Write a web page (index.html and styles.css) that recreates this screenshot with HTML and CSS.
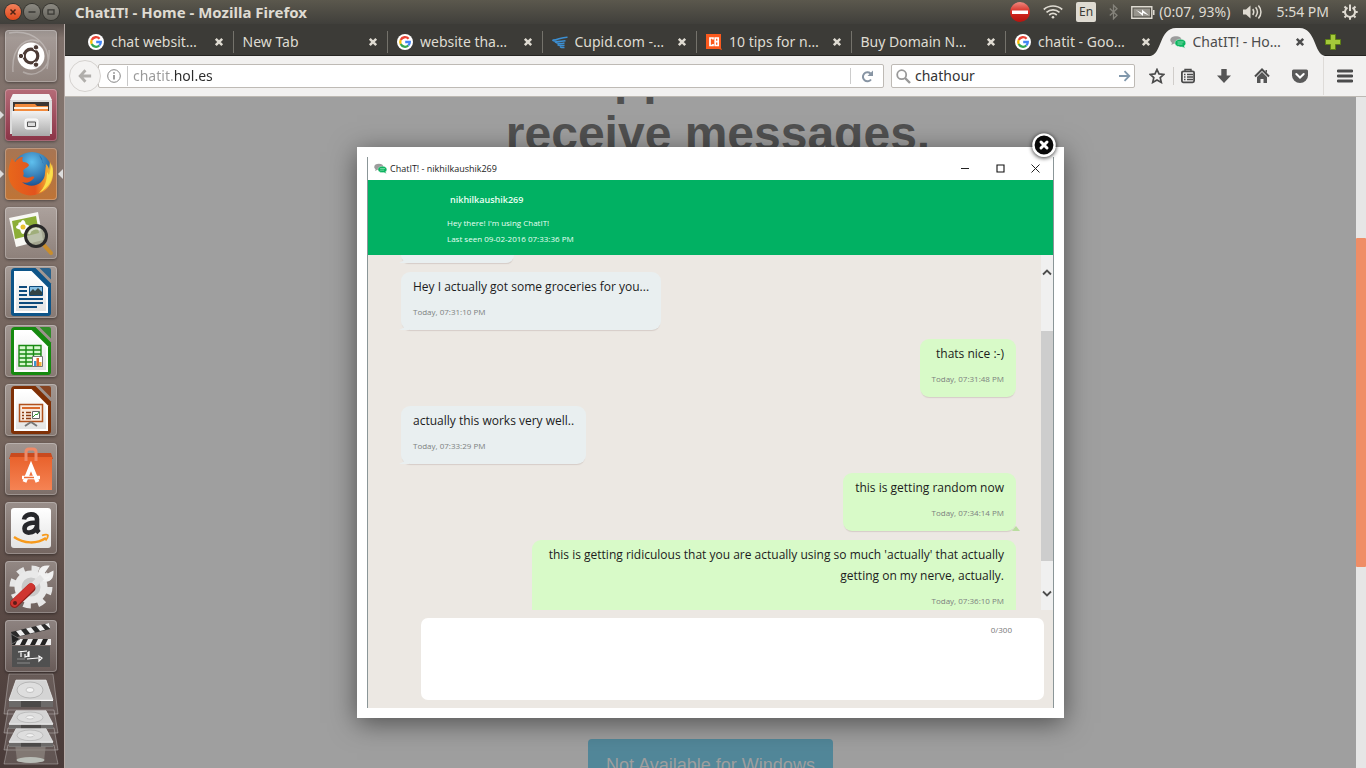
FILE: index.html
```html
<!DOCTYPE html>
<html lang="en">
<head>
<meta charset="utf-8">
<title>ChatIT! - Home</title>
<link rel="stylesheet" href="styles.css">
</head>
<body>
<svg class="defs" aria-hidden="true">
  <defs>
    <linearGradient id="silver" x1="0" y1="0" x2="0" y2="1"><stop offset="0" stop-color="#f2f2f2"/><stop offset="1" stop-color="#a9a9a9"/></linearGradient>
    <linearGradient id="paper" x1="0" y1="0" x2="0" y2="1"><stop offset="0" stop-color="#fff"/><stop offset="1" stop-color="#e4e4e4"/></linearGradient>
    <linearGradient id="bag" x1="0" y1="0" x2="0" y2="1"><stop offset="0" stop-color="#e9622c"/><stop offset="1" stop-color="#f58354"/></linearGradient>
    <radialGradient id="globe" cx=".5" cy=".25" r=".7"><stop offset="0" stop-color="#5fc0ee"/><stop offset="1" stop-color="#123f80"/></radialGradient>
    <linearGradient id="fox" x1="0" y1="0" x2="1" y2="0"><stop offset="0" stop-color="#e8671b"/><stop offset=".6" stop-color="#e2531d"/><stop offset="1" stop-color="#f9d23c"/></linearGradient>
    <linearGradient id="stop" x1="0" y1="0" x2="0" y2="1"><stop offset="0" stop-color="#f08a80"/><stop offset=".5" stop-color="#d5281f"/><stop offset="1" stop-color="#b3140f"/></linearGradient>
    <symbol id="google" viewBox="0 0 16 16">
      <circle cx="8" cy="8" r="8" fill="#fff"/>
      <g fill="none" stroke-width="2.3">
        <path d="M11.6 4.8A4.8 4.8 0 0 0 3.7 5.9" stroke="#ea4335"/>
        <path d="M3.7 5.9a4.8 4.8 0 0 0 0 4.2" stroke="#fbbc05"/>
        <path d="M3.7 10.1a4.8 4.8 0 0 0 7.6 1.4" stroke="#34a853"/>
        <path d="M11.3 11.5A4.6 4.6 0 0 0 12.8 8H8.2" stroke="#4285f4"/>
      </g>
    </symbol>
    <symbol id="chat" viewBox="0 0 16 16">
      <path d="M6 2.2c3.300 0 5.600 1.500 5.600 3.800S9.300 9.800 6 9.800H3.800L1.300 11l.7-2.200C1 8.100.3 7.100.3 6c0-2.300 2.400-3.800 5.700-3.800z" fill="#9c9c9c"/>
      <path d="M10.500 5.200c3.300 0 5.300 1.600 5.300 3.900 0 1.200-.6 2.200-1.600 2.900l1 2.200-3-1.200h-1.700c-3.300 0-5.600-1.500-5.600-3.900s2.300-3.900 5.600-3.900z" fill="#0bb45f" stroke="#f2f1f0" stroke-width=".5"/>
      <path d="M7.500 8h6M7.500 10h5" stroke="#8fe0b4" stroke-width=".9"/>
    </symbol>
    <symbol id="cross" viewBox="0 0 10 10"><path d="M1.800 1.800l6.400 6.400M8.200 1.800L1.800 8.200" stroke="currentColor" stroke-width="2.500" fill="none"/></symbol>
    <symbol id="doc" viewBox="0 0 52 52">
      <path d="M10 2h20.500L46 17.500V47a3 3 0 0 1-3 3H9a3 3 0 0 1-3-3V6a4 4 0 0 1 4-4z" fill="currentColor"/>
      <path d="M34.500 2h9.500a2 2 0 0 1 2 2v9.500z" fill="currentColor" opacity=".8"/>
      <path d="M9 5h17.500L43 21.500V47H9z" fill="#fff"/><path d="M11 7h14.500L41 22.500V45H11z" fill="url(#paper)"/>
    </symbol>
    <symbol id="drive" viewBox="0 0 48 30" preserveAspectRatio="none">
      <path d="M9 1h30l7 20v7H2v-7z" fill="#bcbcbc"/><path d="M9 1h30l7 20H2z" fill="#d4d4d4" stroke="#eee" stroke-width=".6"/>
      <ellipse cx="23" cy="11" rx="13" ry="8" fill="#dedede" stroke="#b7b7b7"/><ellipse cx="23" cy="11" rx="4" ry="2.500" fill="#f4f4f4" stroke="#aaa" stroke-width=".6"/>
      <path d="M2 21.500h44v6.500H2z" fill="#6c6a69"/><path d="M14 22h20v6H14z" fill="#4b4948"/><path d="M2 21.500h44" stroke="#fafafa"/>
    </symbol>
  </defs>
</svg>

<header class="panel">
  <div class="window-buttons">
    <button class="wm wm-close" aria-label="Close window"><svg viewBox="0 0 16 16"><path d="M5.500 5.500l5 5M10.500 5.500l-5 5" stroke="#4d2415" stroke-width="1.500"/></svg></button>
    <button class="wm" aria-label="Minimize window"><svg viewBox="0 0 16 16"><path d="M4.500 8h7" stroke="#3a3935" stroke-width="1.500"/></svg></button>
    <button class="wm" aria-label="Restore window"><svg viewBox="0 0 16 16"><path d="M5 5.800h6v4.400H5z" stroke="#3a3935" stroke-width="1.300" fill="none"/></svg></button>
  </div>
  <div class="window-title">ChatIT! - Home - Mozilla Firefox</div>
  <div class="indicators">
    <svg width="20" height="22" viewBox="0 0 20 22"><circle cx="10" cy="11" r="10" fill="url(#stop)"/><path d="M2 9.500h16v3.500H2z" fill="#fff"/></svg>
    <svg width="20" height="16" viewBox="0 0 20 16" fill="none" stroke="#dfdbd2" stroke-width="1.700"><path d="M.8 5.500C6 .8 14 .8 19.200 5.500M3.500 8.300c3.800-3.300 9.200-3.300 13 0M6.200 11c2.300-1.900 5.300-1.900 7.600 0"/><circle cx="10" cy="13.300" r="1.300" fill="#dfdbd2" stroke="none"/></svg>
    <span class="lang">En</span>
    <svg width="9" height="16" viewBox="0 0 9 16"><path d="M.8 4.500L8 11.300 4.500 14.800V1.200L8 4.700.8 11.500" fill="none" stroke="#85837b" stroke-width="1.300"/></svg>
    <span class="battery"><svg width="24" height="13" viewBox="0 0 24 13"><path d="M.8.800h20v11.400H.8z" fill="none" stroke="#dfdbd2" stroke-width="1.400"/><path d="M22 4h1.500v5H22z" fill="#dfdbd2"/><path d="M2.500 2.500h16.500v8H2.500z" fill="#97948c"/><path d="M5 4l6 3V3.500l7 6-6-2.500v3z" fill="#fff"/></svg>(0:07, 93%)</span>
    <svg width="20" height="16" viewBox="0 0 20 16"><path d="M0 5.500h3L7.500 1.500v13L3 10.500H0z" fill="#dfdbd2"/><path d="M9.800 5c1.200 1.800 1.200 4.200 0 6M12.600 3.300c2.200 2.800 2.200 6.600 0 9.400M15.400 1.500c3.400 3.900 3.400 9.100 0 13" fill="none" stroke="#dfdbd2" stroke-width="1.500"/></svg>
    <span>5:54 PM</span>
    <svg width="16" height="16" viewBox="0 0 16 16" fill="none" stroke="#dfdbd2"><path d="M5.500 3.600a5 5 0 1 0 5 0" stroke-width="2"/><path d="M8 .5v6.500" stroke-width="2"/><path d="M2.500 2.500l1.700 1.700M13.500 2.500l-1.700 1.700M.3 8h2.500M13.200 8h2.500M2.500 13.500l1.700-1.700M13.500 13.500l-1.700-1.700M8 13v2.700" stroke-width="2"/></svg>
  </div>
</header>

<div class="desktop">
<nav class="launcher" aria-label="Launcher">
  <a href="#" class="tile" aria-label="Dash"><svg viewBox="0 0 52 52"><g fill="none" stroke="#fff" opacity=".28" stroke-width="1.500"><path d="M4 3c24-4 44 12 38 36M8 42C6 14 24 6 34 12M44 20c2 20-14 28-26 22"/></g><circle cx="26" cy="26" r="13.500" fill="#fff"/><circle cx="26" cy="26" r="6.800" fill="none" stroke="#4c3b36" stroke-width="3.200"/><g fill="#4c3b36" stroke="#fff"><circle cx="16" cy="26" r="2.700"/><circle cx="31" cy="17.300" r="2.700"/><circle cx="31" cy="34.700" r="2.700"/></g></svg></a>
  <a href="#" class="tile tile-files is-running" aria-label="Files"><svg viewBox="0 0 52 52"><path d="M8 5h36l3 7v33H5V12z" fill="#dcdcdc"/><path d="M8 5h36l3 6H5z" fill="#f4f4f4"/><path d="M8 13h36v9H8z" fill="#3b3634"/><path d="M10 15h20l2 2h11v6H9z" fill="#f28a3c"/><path d="M9 18h34v2H9z" fill="#fff0df"/><path d="M7 22h38v25H7z" fill="url(#silver)"/><rect x="20" y="30" width="13" height="10" rx="2" fill="#eee" stroke="#fff"/><path d="M22.500 33h8v4.500h-8z" fill="#ddd" stroke="#555"/></svg></a>
  <a href="#" class="tile tile-firefox is-running is-active" aria-label="Firefox"><svg viewBox="0 0 52 52"><circle cx="27" cy="24" r="20" fill="url(#globe)"/><path d="M34 7c3 2 4 5 3 7l5 6-3 10 5-4z" fill="#2c6fae"/><path d="M7 10c1 2 2 3 3 4 2-3 5-5 8-5-1 2-1 3 0 5 3 0 5 1 6 3-1 3-5 3-6 6 1 2 1 3 0 5 2 2 5 2 8 1 2-1 4 0 3 1-3 4-8 6-12 4 9 8 23 2 23-9l1-9c2 2 3 4 3 6l1-8c3 6 4 12 2 18-4 13-20 20-33 12C2 37 1 23 7 10z" fill="url(#fox)"/><path d="M47 16c3 14-3 24-13 29 6-6 8-12 8-21l2 3z" fill="#fbe04c"/></svg></a>
  <a href="#" class="tile" aria-label="Image Viewer"><svg viewBox="0 0 52 52"><path d="M4 11l29-6 5 28-27 7z" fill="#f8f8f4"/><path d="M7 14l24-5 3 17-24 6z" fill="#8cae37"/><g fill="#fff"><ellipse cx="18" cy="20" rx="7" ry="3"/><ellipse cx="18" cy="20" rx="3" ry="7"/><ellipse cx="18" cy="20" rx="6" ry="3" transform="rotate(45 18 20)"/></g><circle cx="18" cy="20" r="2.500" fill="#e9c12f"/><path d="M38 37l8 9" stroke="#c88d2c" stroke-width="4" stroke-linecap="round"/><circle cx="31" cy="29" r="10.500" fill="#a7ae93" fill-opacity=".75" stroke="#292929" stroke-width="3"/><path d="M24 27a7 7 0 0 1 11-4" stroke="#fff" fill="none" opacity=".6" stroke-width="2"/></svg></a>
  <a href="#" class="tile" aria-label="Writer"><svg viewBox="0 0 52 52" color="#0d5488"><use href="#doc"/><path d="M14 21h8M14 25h8M14 29h8M14 33h24M14 37h24M14 41h18" stroke="#0d4a7c" stroke-width="1.900"/><path d="M24.500 20.500h13v9h-13z" fill="#85bfe4" stroke="#0d4a7c"/><path d="M25 29v-3l3-3 2 2 3-3 4 4v3z" fill="#344"/></svg></a>
  <a href="#" class="tile" aria-label="Calc"><svg viewBox="0 0 52 52" color="#15890f"><use href="#doc"/><path d="M14 20h22v21H14z" fill="#d8f7cf"/><path d="M14 20.500h22V41H14zM14 25h22M14 29h22M14 33h22M14 37h22M21 20v21M28.500 20v21" stroke="#198a13" stroke-width="1.400" fill="none"/><path d="M27.500 31.500h10v10h-10z" fill="#fff" stroke="#777"/><path d="M29 36h2.500v5H29z" fill="#3a97d2"/><path d="M31.500 33H34v8h-2.500z" fill="#e4682a"/><path d="M34 37h2.500v4H34z" fill="#f3b43b"/></svg></a>
  <a href="#" class="tile" aria-label="Impress"><svg viewBox="0 0 52 52" color="#7f3006"><use href="#doc"/><path d="M14.500 20.500h23v17h-23z" fill="#f8e9dd" stroke="#b0501c" stroke-width="1.500"/><path d="M17 24h18" stroke="#d8692d" stroke-width="2"/><path d="M17 28.500h2M17 31.500h2M17 34.500h2M21 28.500h5M21 31.500h5M21 34.500h5" stroke="#8d3c12" stroke-width="1.600"/><path d="M27.500 27.500h7v7h-7z" fill="#fff" stroke="#666"/><path d="M28 33l3-3 1 1 2-3" stroke="#2d9a2d" fill="none"/><path d="M26 38l-6 4M26 38l6 4" stroke="#777" stroke-width="2"/></svg></a>
  <a href="#" class="tile" aria-label="Software"><svg viewBox="0 0 52 52"><path d="M6 10h40l2 6H4z" fill="#c94a1e"/><path d="M5 14h42v33H5z" fill="url(#bag)"/><path d="M21 18V9q0-3 3-3h4q3 0 3 3v9" fill="none" stroke="#ee8a68" stroke-width="3"/><path d="M19.500 39L26 23l6.500 16" fill="none" stroke="#fff" stroke-width="4"/><path d="M17 34.500h18" stroke="#fff" stroke-width="3.500"/><path d="M19 34.500h10" stroke="#ee6d35" stroke-width="1.500"/></svg></a>
  <a href="#" class="tile" aria-label="Amazon"><svg viewBox="0 0 52 52"><rect x="6" y="6" width="40" height="40" rx="3" fill="url(#paper)"/><path d="M19 17.500c1-6.500 13-7 13-.5v9.500c0 2 .8 3 2 4.200M32 20.500c-8 0-12.500 1.500-12.500 6.300 0 5.700 9.500 5 12.300-1.800" fill="none" stroke="#26272b" stroke-width="4.600"/><path d="M9 35c10 7 23 7 32 1" fill="none" stroke="#f79a1c" stroke-width="2.500"/><path d="M37 33.500c3-1.500 6-1 6-.2s-.8 3.500-2.500 5.200" fill="none" stroke="#f79a1c" stroke-width="1.800"/></svg></a>
  <a href="#" class="tile" aria-label="Settings"><svg viewBox="0 0 52 52"><circle cx="26" cy="26" r="18.500" fill="none" stroke="#e6e6e6" stroke-width="6" stroke-dasharray="7.300 7.230"/><circle cx="26" cy="26" r="13" fill="#c9c9c9" stroke="#e9e9e9" stroke-width="7"/><path d="M34 20l5-4M37 17c-5-5-1-11 5-11l-4 6 3 3 6-3c0 6-5 9-10 6" fill="#f4f4f4" stroke="#f1f1f1" stroke-width="3"/><path d="M37 16L22 30" stroke="#e2e2e2" stroke-width="6"/><path d="M26 27L9.500 42.500" stroke="#8e1e1a" stroke-width="9" stroke-linecap="round"/><path d="M26 26L9.500 42" stroke="#cf3530" stroke-width="7.500" stroke-linecap="round"/><circle cx="10" cy="42" r="2" fill="#5b1c19"/></svg></a>
  <a href="#" class="tile" aria-label="Video Editor"><svg viewBox="0 0 52 52"><path d="M7 26h38v21H7z" fill="#505050"/><path d="M7 19h39v6H7z" fill="#222"/><path d="M10 25l3-6h5l-3 6zM20 25l3-6h5l-3 6zM30 25l3-6h5l-3 6zM40 25l3-6h3v6z" fill="#eee"/><path d="M6 12l38-9 1.500 6L8 18z" fill="#2a2a2a"/><path d="M11 11l5-1.200 4 5-5 1.200zM21 8.500l5-1.200 4 5-5 1.200zM31 6l5-1.200 4 5-5 1.200zM40 4l4-1 1.500 6z" fill="#eee"/><path d="M6 14l9 5-8 5z" fill="#222" stroke="#777" stroke-width=".8"/><path d="M13 32l9-1M16 31v6M20 34v3l3-1v-4M24 31v6M22 39l11-1M34 36v5l3-3z" stroke="#fff" stroke-width="1.200" fill="none"/><path d="M12 39h8M12 43h13" stroke="#999" stroke-width=".8"/></svg></a>
  <svg class="stack" viewBox="0 0 58 94" aria-label="Disks and trash"><g stroke="#fff" stroke-opacity=".3" fill="#fff" fill-opacity=".13"><path d="M7 2h44l5 40H2zM6 38h46l4 23H2zM6 56h46l4 22H2zM6 73h46l4 19H2z"/></g><path d="M13 72h31l-2 17q-13 4-27 0z" fill="#8e8782" fill-opacity=".7"/><ellipse cx="28.500" cy="88" rx="14" ry="3" fill="#b9bdb7"/><use href="#drive" x="5" y="7" width="48" height="30"/><use href="#drive" x="5" y="38" width="48" height="20"/><use href="#drive" x="5" y="56" width="48" height="20"/></svg>
</nav>

<div class="browser">
  <div class="tabstrip">
    <div class="tabs">
      <div class="tab"><svg class="favicon"><use href="#google"/></svg><span class="tab-label">chat websit…</span><button class="tab-close" aria-label="Close tab"><svg><use href="#cross"/></svg></button></div>
      <div class="tab"><span class="tab-label">New Tab</span><button class="tab-close" aria-label="Close tab"><svg><use href="#cross"/></svg></button></div>
      <div class="tab"><svg class="favicon"><use href="#google"/></svg><span class="tab-label">website tha…</span><button class="tab-close" aria-label="Close tab"><svg><use href="#cross"/></svg></button></div>
      <div class="tab"><svg class="favicon" viewBox="0 0 16 16"><path d="M.5 6C5 6.500 9 3 15.500 3.200M.5 6c1 1.500 5 2 13 .8M3 8c2 1.600 5 2 9.500 1M5.500 10.500c2 1.300 4 1.300 7 .8M8 12.800c1.500.8 3 .9 4.500.7" fill="none" stroke="#3c8fd3" stroke-width="1.500"/></svg><span class="tab-label">Cupid.com -…</span><button class="tab-close" aria-label="Close tab"><svg><use href="#cross"/></svg></button></div>
      <div class="tab"><svg class="favicon" viewBox="0 0 16 16"><path d="M0 0h15v14l1 2-3-1H0z" fill="#fb5a1e"/><path d="M7 5.500V4H4v7.500h3V10M9.200 4v7.500h3V4zM9.200 7.700h3" fill="none" stroke="#fff" stroke-width="1.700"/></svg><span class="tab-label">10 tips for n…</span><button class="tab-close" aria-label="Close tab"><svg><use href="#cross"/></svg></button></div>
      <div class="tab"><span class="tab-label">Buy Domain N…</span><button class="tab-close" aria-label="Close tab"><svg><use href="#cross"/></svg></button></div>
      <div class="tab"><svg class="favicon"><use href="#google"/></svg><span class="tab-label">chatit - Goo…</span><button class="tab-close" aria-label="Close tab"><svg><use href="#cross"/></svg></button></div>
      <div class="tab tab-active"><svg class="tab-shape" viewBox="0 0 176 28" preserveAspectRatio="none"><path d="M0 28C12 27 9 0 26 0H150c17 0 14 27 26 28z" fill="#f2f1f0"/></svg><svg class="favicon"><use href="#chat"/></svg><span class="tab-label">ChatIT! - Ho…</span><button class="tab-close" aria-label="Close tab"><svg><use href="#cross"/></svg></button></div>
    </div>
    <button class="new-tab" aria-label="New tab"><svg viewBox="0 0 16 16"><path d="M5.500.5h5v5h5v5h-5v5h-5v-5h-5v-5h5z" fill="#a5c93a" stroke="#5d7f14"/></svg></button>
  </div>

  <div class="toolbar">
    <button class="back" aria-label="Back"><svg viewBox="0 0 16 16"><path d="M8.500 1.500L2.500 8l6 6.500M3 8h12" fill="none" stroke="#b0aeab" stroke-width="3.200"/></svg></button>
    <div class="urlbar">
      <svg width="14" height="14" viewBox="0 0 14 14"><circle cx="7" cy="7" r="6.300" fill="none" stroke="#858585"/><path d="M7 6v4.500M7 3.200v1.600" stroke="#858585" stroke-width="1.600"/></svg>
      <input class="address" type="text" value="chatit.hol.es" aria-label="Address">
      <button class="reload" aria-label="Reload"><svg width="13" height="13" viewBox="0 0 13 13"><path d="M10 9.500A4.500 4.500 0 1 1 9.500 3.500" fill="none" stroke="#8794a3" stroke-width="2"/><path d="M12 .5v5.500H6.500z" fill="#8794a3"/></svg></button>
    </div>
    <div class="searchbar">
      <svg width="15" height="15" viewBox="0 0 15 15" fill="none" stroke="#999"><circle cx="5.700" cy="5.700" r="4.500" stroke-width="1.800"/><path d="M9 9l5 5" stroke-width="2.400"/></svg>
      <input type="text" value="chathour" aria-label="Search">
      <button aria-label="Search"><svg width="12" height="12" viewBox="0 0 12 12"><path d="M0 6h10M5.500 1.200L10.300 6l-4.800 4.800" fill="none" stroke="#8198ac" stroke-width="1.800"/></svg></button>
    </div>
    <div class="tools">
      <button class="tool tool-star" aria-label="Bookmark"><svg viewBox="0 0 16 16"><path d="M8 1.500l2 4.400 4.900.5-3.700 3.200 1.100 4.800L8 11.900l-4.300 2.500 1.100-4.800L1.100 6.400 6 5.900z" fill="none" stroke="#4b4b4b" stroke-width="1.700"/></svg></button>
      <button class="tool tool-list" aria-label="Bookmarks menu"><svg viewBox="0 0 16 16"><rect x="1.900" y="3.300" width="12.200" height="11" rx="1.500" fill="none" stroke="#4b4b4b" stroke-width="1.800"/><path d="M5 4V1.500h6V4M4 6.500h1.500M7 6.500h6M4 9h1.500M7 9h6M4 11.500h1.500M7 11.500h6" fill="none" stroke="#4b4b4b" stroke-width="1.400"/></svg></button>
      <button class="tool" aria-label="Downloads"><svg viewBox="0 0 16 16"><path d="M5.300 1h5.400v6.500H15L8 15 1 7.500h4.300z" fill="#555"/></svg></button>
      <button class="tool" aria-label="Home"><svg viewBox="0 0 16 16"><path d="M1 8.500l7-7 7 7" fill="none" stroke="#4b4b4b" stroke-width="2"/><path d="M3 9l5-5 5 5v6H9.500v-4h-3v4H3zM11.500 2H13v3l-1.500-1z" fill="#555"/></svg></button>
      <button class="tool" aria-label="Pocket"><svg viewBox="0 0 16 16"><path d="M1.500 1.500h13Q16 1.500 16 3v4.500a8 7.500 0 0 1-16 0V3q0-1.500 1.500-1.500z" fill="#5a5a5a"/><path d="M4.300 6L8 9.500 11.700 6" fill="none" stroke="#fff" stroke-width="2" stroke-linecap="round"/></svg></button>
      <button class="tool tool-menu" aria-label="Menu"><svg viewBox="0 0 16 16"><path d="M1 3h14M1 8h14M1 13h14" stroke="#4b4b4b" stroke-width="2.800" stroke-linecap="round"/></svg></button>
    </div>
  </div>

  <main class="viewport">
    <div class="page">
      <h1 class="headline">App to send<br>receive messages.</h1>
      <button class="download">Not Available for Windows</button>
    </div>
    <div class="page-scroll"><div class="page-thumb"></div></div>

    <div class="overlay">
      <div class="lightbox" role="dialog" aria-label="ChatIT! - nikhilkaushik269">
        <button class="lightbox-close" aria-label="Close"><svg viewBox="0 0 24 24"><circle cx="12" cy="12" r="10.500" fill="#080808" stroke="#fff" stroke-width="2.200"/><path d="M9 9l6 6M15 9l-6 6" stroke="#fff" stroke-width="3" stroke-linecap="round"/></svg></button>
        <section class="chat">
          <div class="chat-title">
            <svg width="13" height="13"><use href="#chat"/></svg>
            <span>ChatIT! - nikhilkaushik269</span>
            <div class="chat-controls">
              <button aria-label="Minimize"><svg viewBox="0 0 9 9"><path d="M0 4.500h8" stroke="#222"/></svg></button>
              <button aria-label="Maximize"><svg viewBox="0 0 9 9"><path d="M1 1h7v7H1z" fill="none" stroke="#111" stroke-width="1.100"/></svg></button>
              <button aria-label="Close chat"><svg viewBox="0 0 9 9"><path d="M.5.500l8 8M8.500.500l-8 8" stroke="#222"/></svg></button>
            </div>
          </div>
          <header class="contact">
            <h2>nikhilkaushik269</h2>
            <p>Hey there! I'm using ChatIT!</p>
            <p>Last seen 09-02-2016 07:33:36 PM</p>
          </header>
          <div class="history">
            <div class="messages">
              <div class="bubble bubble-in bubble-cut"></div>
              <div class="bubble bubble-in"><p>Hey I actually got some groceries for you...</p><time>Today, 07:31:10 PM</time></div>
              <div class="bubble bubble-out"><p>thats nice :-)</p><time>Today, 07:31:48 PM</time></div>
              <div class="bubble bubble-in"><p>actually this works very well..</p><time>Today, 07:33:29 PM</time></div>
              <div class="bubble bubble-out has-tail"><p>this is getting random now</p><time>Today, 07:34:14 PM</time></div>
              <div class="bubble bubble-out"><p>this is getting ridiculous that you are actually using so much 'actually' that actually getting on my nerve, actually.</p><time>Today, 07:36:10 PM</time></div>
            </div>
            <div class="chat-scroll">
              <svg viewBox="0 0 10 8"><path d="M1 6.500l4-4 4 4" fill="none" stroke="#4d4d4d" stroke-width="1.800"/></svg>
              <div class="chat-thumb"></div>
              <svg viewBox="0 0 10 8"><path d="M1 1.500l4 4 4-4" fill="none" stroke="#4d4d4d" stroke-width="1.800"/></svg>
            </div>
          </div>
          <div class="composer">
            <textarea aria-label="Message"></textarea>
            <span class="counter">0/300</span>
          </div>
        </section>
      </div>
    </div>
  </main>
</div>
</div>
</body>
</html>
```
FILE: styles.css
```css
* { box-sizing: border-box; }

body {
  margin: 0;
  height: 100vh;
  display: flex;
  flex-direction: column;
  overflow: hidden;
  font: 14px/20px "Noto Sans", sans-serif;
}

button { border: 0; padding: 0; background: none; font: inherit; color: inherit; display: block; }
input, textarea { border: 0; padding: 0; background: none; font: inherit; color: inherit; outline: 0; min-width: 0; }
svg { display: block; flex: none; }
p, h1, h2 { margin: 0; }
.defs { position: absolute; width: 0; height: 0; }

/* Top panel */
.panel {
  flex: none;
  height: 24px;
  display: flex;
  align-items: center;
  padding: 0 8px 0 5px;
  background: linear-gradient(#5b584d, #403f3b);
  color: #dfdbd2;
}
.window-buttons { display: flex; gap: 3px; }
.wm { width: 16px; height: 16px; border-radius: 50%; background: linear-gradient(#8c8a82, #66645d); box-shadow: 0 0 0 1px #35342f; }
.wm-close { background: linear-gradient(#f2815b, #e0481a); }
.window-title { flex: 1; margin-left: 16px; font-weight: 700; font-size: 15px; white-space: nowrap; }
.indicators { display: flex; align-items: center; gap: 13px; font-size: 14px; white-space: nowrap; }
.lang { padding: 0 3px; border-radius: 2px; background: #dfdbd2; color: #3c3b37; font-size: 12px; line-height: 20px; }
.battery { display: flex; align-items: center; gap: 4px; }

/* Launcher */
.desktop { flex: 1; min-height: 0; display: flex; }
.launcher {
  flex: none;
  width: 65px;
  display: flex;
  flex-direction: column;
  align-items: center;
  gap: 7px;
  padding: 6px 2px 0 0;
  overflow: hidden;
  border-right: 1px solid #b5aaa6;
  background: linear-gradient(#584e4a, #7f716b 14px, #85766f 180px, #75665f 300px, #77675f 400px, #5c4c47 560px, #493b39);
}
.tile {
  position: relative;
  flex: none;
  width: 52px;
  height: 52px;
  border-radius: 4px;
  background: linear-gradient(rgba(255, 255, 255, .32), rgba(255, 255, 255, .12));
  box-shadow: inset 0 0 0 1px rgba(255, 255, 255, .25), 0 1px 3px rgba(0, 0, 0, .4);
}
.tile-files { background: linear-gradient(#b56c78, #8a3346); }
.tile-firefox { background: linear-gradient(#a77553, #bf7436); }
.is-running::before, .is-active::after {
  content: "";
  position: absolute;
  top: 21px;
  border: 5px solid transparent;
}
.is-running::before { left: -6px; border-left-color: #ddd; border-right: 0; }
.is-active::after { right: -6px; border-right-color: #ddd; border-left: 0; }
.stack { width: 58px; height: 94px; margin-top: -7px; }

/* Tabs */
.browser { flex: 1; min-width: 0; display: flex; flex-direction: column; }
.tabstrip {
  flex: none;
  height: 32px;
  display: flex;
  align-items: center;
  padding: 0 25px 0 14px;
  background: #3c3b37;
  box-shadow: inset 0 -1px #262522;
}
.tabs { flex: 1; min-width: 0; height: 100%; display: flex; align-items: center; padding-top: 4px; }
.tab {
  position: relative;
  flex: 1 1 0;
  min-width: 0;
  height: 22px;
  display: flex;
  align-items: center;
  gap: 7px;
  padding: 0 9px;
  border-right: 1px solid #74726b;
  color: #dfdbd2;
}
.tab:nth-last-child(-n+2) { border-right-color: transparent; }
.favicon { position: relative; width: 16px; height: 16px; }
.tab-label { position: relative; flex: 1; min-width: 0; overflow: hidden; white-space: nowrap; }
.tab-close { position: relative; width: 10px; height: 10px; }
.tab-close svg { width: 10px; height: 10px; }
.tab-active { color: #4c4c4c; }
.tab-shape { position: absolute; left: -11px; top: -3px; width: calc(100% + 22px); height: 28px; }
.new-tab { width: 16px; height: 16px; margin: 4px 0 0 10px; }

/* Navigation toolbar */
.toolbar {
  flex: none;
  height: 41px;
  display: flex;
  align-items: center;
  padding: 0 13px 0 4px;
  background: #f2f1f0;
  border-bottom: 1px solid #bdb9b3;
  color: #333;
}
.back {
  position: relative;
  z-index: 1;
  flex: none;
  width: 32px;
  height: 32px;
  padding: 8px;
  border: 1px solid #d5d2cf;
  border-radius: 50%;
  background: #f4f3f2;
}
.back svg { width: 14px; height: 14px; }
.urlbar, .searchbar {
  height: 24px;
  display: flex;
  align-items: center;
  border: 1px solid #bebab5;
  border-radius: 2px;
  background: #fff;
}
.urlbar { flex: 1; min-width: 0; margin-left: -3px; padding-left: 8px; gap: 6px; }
.address {
  flex: 1;
  border-left: 1px solid #c8c8c8;
  padding-left: 5px;
  background: linear-gradient(90deg, #999 47px, #2b2b2b 47px);
  -webkit-background-clip: text;
  background-clip: text;
  color: transparent;
}
.reload { width: 33px; height: 16px; padding: 0 10px; border-left: 1px solid #ccc; }
.searchbar { flex: none; width: 244px; margin-left: 7px; padding: 0 3px 0 4px; gap: 4px; }
.searchbar input { flex: 1; }
.tools { display: flex; align-items: center; margin-left: 14px; }
.tool { width: 38px; height: 38px; padding: 11px; }
.tool svg { width: 16px; height: 16px; }
.tool-star { width: 24px; padding: 11px 0; }
.tool-list { width: 34px; margin-right: -2px; padding: 11px 7px; background: linear-gradient(#d0cdca, #d0cdca) 0 50% / 1px 18px no-repeat; }
.tool-menu { width: 30px; margin-left: 4px; padding: 11px 0 11px 13px; border-left: 1px solid #dedbd8; }

/* Page */
.viewport { position: relative; flex: 1; min-height: 0; display: flex; overflow: hidden; }
.page {
  flex: 1;
  display: flex;
  flex-direction: column;
  align-items: center;
  justify-content: space-between;
  background: #9f9f9f;
}
.headline { margin-top: -47px; padding-left: 15px; font: 700 48px/56px "Liberation Sans", Arial, sans-serif; color: #505050; text-align: center; }
.download {
  flex: none;
  margin-bottom: -24px;
  padding: 14px 18px;
  border-radius: 4px;
  background: #528799;
  color: #9e9e9e;
  font: 18px/25px "Liberation Sans", Arial, sans-serif;
}
.page-scroll { flex: none; width: 10px; background: #e6e6e6; padding-top: 141px; }
.page-thumb { height: 329px; border-radius: 1px; background: #ef8d66; }

/* Lightbox */
.overlay { position: absolute; inset: 0 10px 0 0; display: flex; align-items: center; justify-content: center; }
.lightbox { position: relative; width: min(707px, 90%); padding: 10px; background: #fff; box-shadow: 0 5px 25px rgba(0, 0, 0, .5); }
.lightbox-close { position: absolute; top: -14px; right: 8px; width: 24px; height: 24px; border-radius: 50%; box-shadow: 0 1px 4px rgba(0, 0, 0, .8); }

.chat {
  height: min(551px, 82vh);
  display: flex;
  flex-direction: column;
  border: solid #8b9698;
  border-width: 0 1px;
  background: #ece8e3;
  font: 12px/21px "Open Sans", sans-serif;
  color: #1c1c1c;
}
.chat-title { flex: none; height: 23px; display: flex; align-items: center; gap: 3px; padding: 0 13px 0 6px; background: #fff; font-size: 9px; }
.chat-controls { display: flex; gap: 26px; margin-left: auto; }
.chat-controls button, .chat-controls svg { width: 9px; height: 9px; }
.contact { flex: none; height: 75px; padding: 10px 0 0 79px; background: #01b163; color: #e9fff3; font-size: 8px; line-height: 16px; }
.contact h2 { margin: 0 0 5px 3px; font-size: 9px; font-weight: 600; line-height: 20px; }
.history { flex: 1; min-height: 0; display: flex; overflow: hidden; }
.messages { flex: 1; min-width: 0; display: flex; flex-direction: column; gap: 9px; padding: 0 25px 0 33px; overflow: hidden; }
.bubble {
  position: relative;
  flex: none;
  max-width: 484px;
  padding: 4px 12px 11px;
  border-radius: 9px;
  box-shadow: 0 2px 1px -1px #d6cdc8;
}
.bubble time { display: block; margin-top: 8px; font-size: 8px; line-height: 14px; color: #7c817f; }
.bubble-in { align-self: flex-start; background: #e9eff0; }
.bubble-in::before { content: ""; position: absolute; left: -2px; bottom: 0; border: solid transparent; border-width: 0 0 5px 10px; border-bottom-color: #e9eff0; }
.bubble-out { align-self: flex-end; background: #d8fac8; text-align: right; }
.bubble-cut { width: 113px; height: 8px; padding: 0; border-radius: 0 0 9px 9px; }
.has-tail::after { content: ""; position: absolute; right: -4px; bottom: 0; border: solid transparent; border-width: 0 4px 5px; border-bottom-color: #b9de9f; }
.chat-scroll { flex: none; width: 12px; display: flex; flex-direction: column; align-items: center; padding: 13px 0 12px; background: #f0f0f0; }
.chat-scroll svg { width: 10px; height: 8px; }
.chat-thumb { width: 12px; height: 230px; margin: 55px 0 auto; background: #cdcdcd; }
.composer { flex: none; height: 82px; display: flex; margin: 8px 9px 8px 53px; padding: 5px 32px 5px 12px; border-radius: 7px; background: #fff; }
.composer textarea { flex: 1; resize: none; }
.counter { font-size: 8px; line-height: 14px; color: #777; }
```
